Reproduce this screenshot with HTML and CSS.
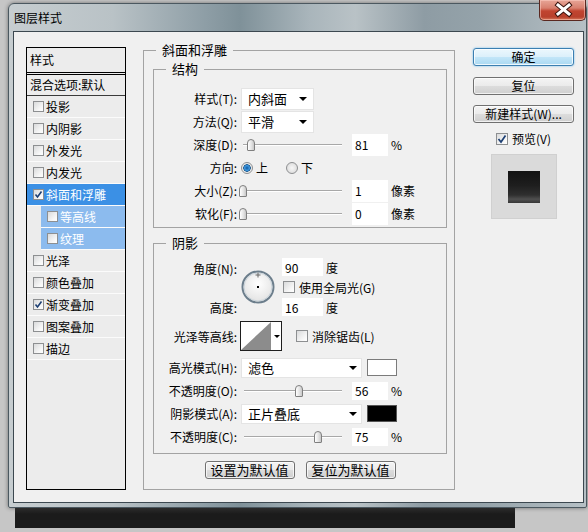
FILE: index.html
```html
<!DOCTYPE html>
<html lang="zh-CN">
<head>
    <meta charset="UTF-8">
    <title>图层样式</title>
    <link rel="stylesheet" href="styles.css">
</head>
<body>
    <div class="window">
        <div class="titlebar">
            <span class="title">图层样式</span>
            <div class="close">
                <svg width="47" height="21" viewBox="0 0 47 21">
                    <path d="M18 6 L29 15 M29 6 L18 15" stroke="#3b1510" stroke-width="5" stroke-linecap="square"/>
                    <path d="M18 6 L29 15 M29 6 L18 15" stroke="#fff" stroke-width="3" stroke-linecap="square"/>
                </svg>
            </div>
        </div>

        <div class="client">
            <!-- style list -->
            <div class="list">
                <div class="list-head">样式</div>
                <div class="list-blend">混合选项:默认</div>
                <div class="list-item"><span class="check"></span>投影</div>
                <div class="list-item"><span class="check"></span>内阴影</div>
                <div class="list-item"><span class="check"></span>外发光</div>
                <div class="list-item"><span class="check"></span>内发光</div>
                <div class="list-item active"><span class="check"><svg width="9" height="9" viewBox="0 0 9 9"><path d="M1.5 4.5 L3.5 7 L7.5 1.5" fill="none" stroke="#1d3f73" stroke-width="1.6"/></svg></span>斜面和浮雕</div>
                <div class="list-item sub"><span class="check"></span>等高线</div>
                <div class="list-item sub"><span class="check"></span>纹理</div>
                <div class="list-item"><span class="check"></span>光泽</div>
                <div class="list-item"><span class="check"></span>颜色叠加</div>
                <div class="list-item"><span class="check"><svg width="9" height="9" viewBox="0 0 9 9"><path d="M1.5 4.5 L3.5 7 L7.5 1.5" fill="none" stroke="#1d3f73" stroke-width="1.6"/></svg></span>渐变叠加</div>
                <div class="list-item"><span class="check"></span>图案叠加</div>
                <div class="list-item"><span class="check"></span>描边</div>
            </div>

            <!-- bevel and emboss settings -->
            <fieldset class="group outer">
                <legend>斜面和浮雕</legend>

                <fieldset class="group inner structure">
                    <legend>结构</legend>
                    <div class="row">
                        <span class="label">样式(T):</span>
                        <div class="select sm">内斜面</div>
                    </div>
                    <div class="row">
                        <span class="label">方法(Q):</span>
                        <div class="select sm">平滑</div>
                    </div>
                    <div class="row">
                        <span class="label">深度(D):</span>
                        <div class="slider"><span class="thumb" style="left:8.1%"></span></div>
                        <span class="field">81</span>
                        <span class="unit">%</span>
                    </div>
                    <div class="row">
                        <span class="label">方向:</span>
                        <span class="radio on"></span><span class="radio-text">上</span>
                        <span class="radio off"></span><span class="radio-text">下</span>
                    </div>
                    <div class="row">
                        <span class="label">大小(Z):</span>
                        <div class="slider"><span class="thumb" style="left:0.4%"></span></div>
                        <span class="field">1</span>
                        <span class="unit">像素</span>
                    </div>
                    <div class="row">
                        <span class="label">软化(F):</span>
                        <div class="slider"><span class="thumb" style="left:0%"></span></div>
                        <span class="field">0</span>
                        <span class="unit">像素</span>
                    </div>
                </fieldset>

                <fieldset class="group inner shading">
                    <legend>阴影</legend>
                    <div class="angle">
                        <span class="label a1">角度(N):</span>
                        <svg class="dial" width="34" height="34" viewBox="0 0 34 34">
                            <defs>
                                <radialGradient id="dialbg" cx="50%" cy="40%" r="60%">
                                    <stop offset="0" stop-color="#ffffff"/>
                                    <stop offset="1" stop-color="#e2e2e2"/>
                                </radialGradient>
                            </defs>
                            <circle cx="17" cy="17" r="15.5" fill="url(#dialbg)" stroke="#6c7e8c" stroke-width="2"/>
                            <circle cx="17" cy="17" r="14" fill="none" stroke="#c9d3da" stroke-width="1"/>
                            <rect x="16" y="16" width="2" height="2" fill="#000"/>
                            <path d="M17 2.5 V7.5 M14.5 5 H19.5" stroke="#666" stroke-width="1"/>
                        </svg>
                        <div class="a-cell r1"><span class="field sm w41">90</span><span class="unit">度</span></div>
                        <div class="a-cell r2"><span class="check big"></span><span class="check-text">使用全局光(G)</span></div>
                        <span class="label a3">高度:</span>
                        <div class="a-cell r3"><span class="field sm w41">16</span><span class="unit">度</span></div>
                    </div>

                    <div class="row contour-row">
                        <span class="label">光泽等高线:</span>
                        <div class="contour">
                            <svg width="30" height="28" viewBox="0 0 30 28">
                                <rect width="30" height="28" fill="#fff"/>
                                <polygon points="0,28 30,0 30,28" fill="#8c8c8c"/>
                            </svg>
                            <span class="contour-arrow"></span>
                        </div>
                        <span class="check big aa"></span><span class="check-text">消除锯齿(L)</span>
                    </div>

                    <div class="modes">
                        <div class="row">
                            <span class="label">高光模式(H):</span>
                            <div class="select lg">滤色</div>
                            <span class="swatch white"></span>
                        </div>
                        <div class="row">
                            <span class="label">不透明度(O):</span>
                            <div class="slider narrow"><span class="thumb" style="left:56%"></span></div>
                            <span class="field sm">56</span>
                            <span class="unit">%</span>
                        </div>
                        <div class="row">
                            <span class="label">阴影模式(A):</span>
                            <div class="select lg">正片叠底</div>
                            <span class="swatch black"></span>
                        </div>
                        <div class="row">
                            <span class="label">不透明度(C):</span>
                            <div class="slider narrow"><span class="thumb" style="left:76%"></span></div>
                            <span class="field sm">75</span>
                            <span class="unit">%</span>
                        </div>
                    </div>
                </fieldset>

                <div class="defaults">
                    <div class="btn wide">设置为默认值</div>
                    <div class="btn wide">复位为默认值</div>
                </div>
            </fieldset>

            <!-- dialog buttons -->
            <div class="actions">
                <div class="btn primary">确定</div>
                <div class="btn reset">复位</div>
                <div class="btn newstyle">新建样式(W)...</div>
                <div class="preview-row">
                    <span class="check big"><svg width="10" height="10" viewBox="0 0 10 10"><path d="M1.5 5 L4 8 L8.5 1.5" fill="none" stroke="#1d3f73" stroke-width="1.7"/></svg></span>
                    <span class="check-text">预览(V)</span>
                </div>
                <div class="preview">
                    <div class="swatch-preview"></div>
                </div>
            </div>
        </div>
    </div>
    <div class="shadow-bar"></div>
</body>
</html>
```

FILE: styles.css
```css
body {
    margin: 0;
    width: 588px;
    height: 532px;
    overflow: hidden;
    background: #c6c6c6;
    font-family: "Noto Sans CJK SC", "Liberation Sans", sans-serif;
    font-size: 12px;
    color: #000;
}
.window {
    margin: 3px 0 0 8px;
    width: 579px;
    height: 505px;
    box-sizing: border-box;
    padding-bottom: 4px;
    border: 1px solid #4b5860;
    border-radius: 6px 6px 2px 2px;
    background: linear-gradient(90deg, #c6cdd0 0%, #b9c2c6 18%, #8e9ea6 34%, #7f9199 40%, #a9b5bb 52%, #b9c2c6 60%, #8e9ca4 72%, #95a3aa 82%, #b6c0c5 100%);
    box-shadow: 0 0 4px rgba(0, 0, 0, 0.45);
    display: flex;
    flex-direction: column;
}
.titlebar {
    height: 27px;
    flex: none;
    display: flex;
    justify-content: space-between;
    align-items: flex-start;
}
.title {
    padding-left: 5px;
    line-height: 27px;
}
.close {
    width: 47px;
    height: 21px;
    margin-top: -4px;
    box-sizing: border-box;
    border: 1px solid #5a2820;
    border-top: none;
    border-radius: 0 0 5px 5px;
    background: linear-gradient(#e7a597 0%, #d8806f 40%, #c14430 55%, #b8402c 85%, #d77a5c 100%);
    box-shadow: inset 0 0 0 1px rgba(255, 210, 200, 0.5);
}
.close svg {
    display: block;
    margin-top: -1px;
}
.client {
    margin: 0 2px 0 4px;
    height: 472px;
    box-sizing: border-box;
    border: 1px solid #3c4850;
    background: #f0f0f0;
    padding: 11px 9px 0 12px;
    display: flex;
    align-items: flex-start;
}

/* left style list */
.list {
    width: 100px;
    height: 443px;
    margin-top: 4px;
    box-sizing: border-box;
    border: 1px solid #000;
    background: #ececec;
    flex: none;
}
.list-head {
    height: 24px;
    line-height: 24px;
    padding-left: 3px;
    border-bottom: 3px double #000;
}
.list-blend {
    height: 20px;
    line-height: 20px;
    padding-left: 3px;
    border-bottom: 1px solid #3a3a3a;
    white-space: nowrap;
}
.list-item {
    height: 21px;
    border-bottom: 1px solid #fbfbfb;
    display: flex;
    align-items: center;
    padding-left: 6px;
    white-space: nowrap;
}
.list-item .check {
    margin-right: 2px;
}
.list-item.active {
    background: #3b90e5;
    color: #fff;
}
.list-item.sub {
    margin-left: 14px;
    background: #8cbbee;
    color: #fff;
}

/* check boxes and radios */
.check {
    width: 11px;
    height: 11px;
    box-sizing: border-box;
    border: 1px solid #8d8f91;
    background: linear-gradient(135deg, #d9dadb, #f7f7f7 70%, #ffffff);
    display: inline-flex;
    align-items: center;
    justify-content: center;
    flex: none;
}
.check.big {
    width: 12px;
    height: 12px;
}
.check-text {
    margin-left: 4px;
    white-space: nowrap;
}
.radio {
    width: 12px;
    height: 12px;
    box-sizing: border-box;
    border-radius: 50%;
    border: 1px solid #8d8f91;
    background: radial-gradient(circle, #f7f7f7, #d6d6d6);
    flex: none;
}
.radio.on {
    margin-left: 4px;
    background: radial-gradient(circle, #0f5aa0 0, #3d97e0 2.5px, #1f5d92 3.5px, #e8e8e8 4px, #f4f4f4 100%);
}
.radio.off {
    margin-left: 18px;
}
.radio-text {
    margin-left: 3px;
}

/* group boxes */
.group {
    margin: 0;
    border: 1px solid #a3a3a3;
    min-width: 0;
}
.group legend {
    padding: 0 6px;
    line-height: 14px;
    font-size: 13px;
}
.outer {
    width: 312px;
    margin-left: 17px;
    box-sizing: border-box;
    padding: 5px 7px 10px 9px;
    flex: none;
}
.outer > legend {
    margin-left: 3px;
}
.inner > legend {
    margin-left: 12px;
}
.structure {
    padding: 11px 0 2px 0;
}
.shading {
    margin-top: 8px;
    padding: 8px 0 5px 0;
}
.row {
    display: flex;
    align-items: center;
    height: 23px;
}
.label {
    width: 83px;
    flex: none;
    text-align: right;
    white-space: nowrap;
}

/* controls */
.select {
    margin-left: 4px;
    box-sizing: border-box;
    background: #fff;
    border: 1px solid #e4e4e4;
    display: flex;
    align-items: center;
    justify-content: space-between;
    padding: 0 6px;
    font-size: 13px;
}
.select::after {
    content: "";
    border-left: 4px solid transparent;
    border-right: 4px solid transparent;
    border-top: 4px solid #000;
}
.select.sm {
    width: 73px;
    height: 22px;
}
.select.lg {
    width: 121px;
    height: 20px;
    padding-right: 4px;
}
.slider {
    position: relative;
    margin-left: 6px;
    width: 99px;
    height: 14px;
    flex: none;
}
.slider.narrow {
    margin-left: 7px;
    width: 98px;
}
.slider::before {
    content: "";
    position: absolute;
    left: 0;
    right: 0;
    top: 6px;
    height: 1px;
    background: #a8a8a8;
    border-bottom: 1px solid #ffffff;
}
.thumb {
    position: absolute;
    top: 1px;
    width: 8px;
    height: 12px;
    margin-left: -4px;
    box-sizing: border-box;
    border: 1px solid #7f7f7f;
    border-radius: 4px 4px 1px 1px;
    background: linear-gradient(90deg, #ffffff, #e2e2e2 60%, #c8c8c8);
}
.field {
    margin-left: 10px;
    width: 36px;
    height: 22px;
    box-sizing: border-box;
    background: #fff;
    padding-left: 3px;
    display: flex;
    align-items: center;
    flex: none;
}
.field.sm {
    height: 18px;
}
.field.w41 {
    width: 41px;
    margin-left: 7px;
}
.unit {
    margin-left: 3px;
    white-space: nowrap;
}
.swatch {
    margin-left: 5px;
    width: 30px;
    height: 17px;
    box-sizing: border-box;
    border: 1px solid #7b7b7b;
}
.swatch.white {
    background: #fff;
}
.swatch.black {
    background: #000;
    border-color: #555;
}

/* angle block */
.angle {
    display: grid;
    grid-template-columns: 83px 38px auto;
    grid-template-rows: 18px 22px 18px;
    align-items: center;
}
.a1 {
    grid-row: 1;
    grid-column: 1;
    padding-top: 3px;
}
.a3 {
    grid-row: 3;
    grid-column: 1;
}
.dial {
    grid-row: 1 / 4;
    grid-column: 2;
    justify-self: end;
}
.a-cell {
    grid-column: 3;
    display: flex;
    align-items: center;
    height: 100%;
}
.r1 { grid-row: 1; }
.r2 { grid-row: 2; }
.r3 { grid-row: 3; }
.r2 .check {
    margin-left: 8px;
}
.contour-row {
    margin-top: 5px;
    height: 30px;
}
.contour {
    margin-left: 3px;
    width: 42px;
    height: 30px;
    box-sizing: border-box;
    border: 1px solid #1e1e1e;
    background: #fff;
    display: flex;
    align-items: center;
}
.contour svg {
    display: block;
}
.contour-arrow {
    margin-left: 3px;
    border-left: 3px solid transparent;
    border-right: 3px solid transparent;
    border-top: 3px solid #000;
}
.aa {
    margin-left: 14px;
}
.modes {
    margin-top: 5px;
}

/* buttons */
.btn {
    box-sizing: border-box;
    height: 18px;
    line-height: 16px;
    text-align: center;
    border: 1px solid #707070;
    border-radius: 3px;
    background: linear-gradient(#f4f4f4 0%, #ebebeb 48%, #dcdcdc 52%, #cfcfcf 100%);
    box-shadow: inset 0 0 0 1px rgba(255, 255, 255, 0.7);
    white-space: nowrap;
}
.btn.primary {
    border-color: #3c7fb1;
    background: linear-gradient(#ecf7fd 0%, #dcf0fb 48%, #c2e5f8 52%, #aad9f2 100%);
    box-shadow: inset 0 0 0 1px rgba(255, 255, 255, 0.8), 0 0 2px #60b6ec;
}
.defaults {
    display: flex;
    justify-content: center;
    gap: 11px;
    margin-top: 7px;
}
.btn.wide {
    width: 90px;
    font-size: 13px;
}
.actions {
    width: 101px;
    margin-left: 18px;
    padding-top: 5px;
    flex: none;
    display: flex;
    flex-direction: column;
    align-items: center;
}
.actions .btn {
    width: 101px;
}
.btn.reset {
    margin-top: 11px;
}
.btn.newstyle {
    margin-top: 10px;
}
.preview-row {
    margin-top: 8px;
    height: 15px;
    display: flex;
    align-items: center;
}
.preview {
    margin-top: 8px;
    width: 66px;
    height: 65px;
    box-sizing: border-box;
    border: 1px solid #d0d0d0;
    background: #dadada;
    display: flex;
    align-items: center;
    justify-content: center;
}
.swatch-preview {
    width: 32px;
    height: 32px;
    background: linear-gradient(#121212 0%, #1e1e1e 45%, #2f2f2f 75%, #4f4f4f 88%, #363636 100%);
}
.shadow-bar {
    margin-left: 15px;
    width: 500px;
    height: 20px;
    background: linear-gradient(#2c2c2c, #1b1b1b 30%, #1b1b1b);
}
```
